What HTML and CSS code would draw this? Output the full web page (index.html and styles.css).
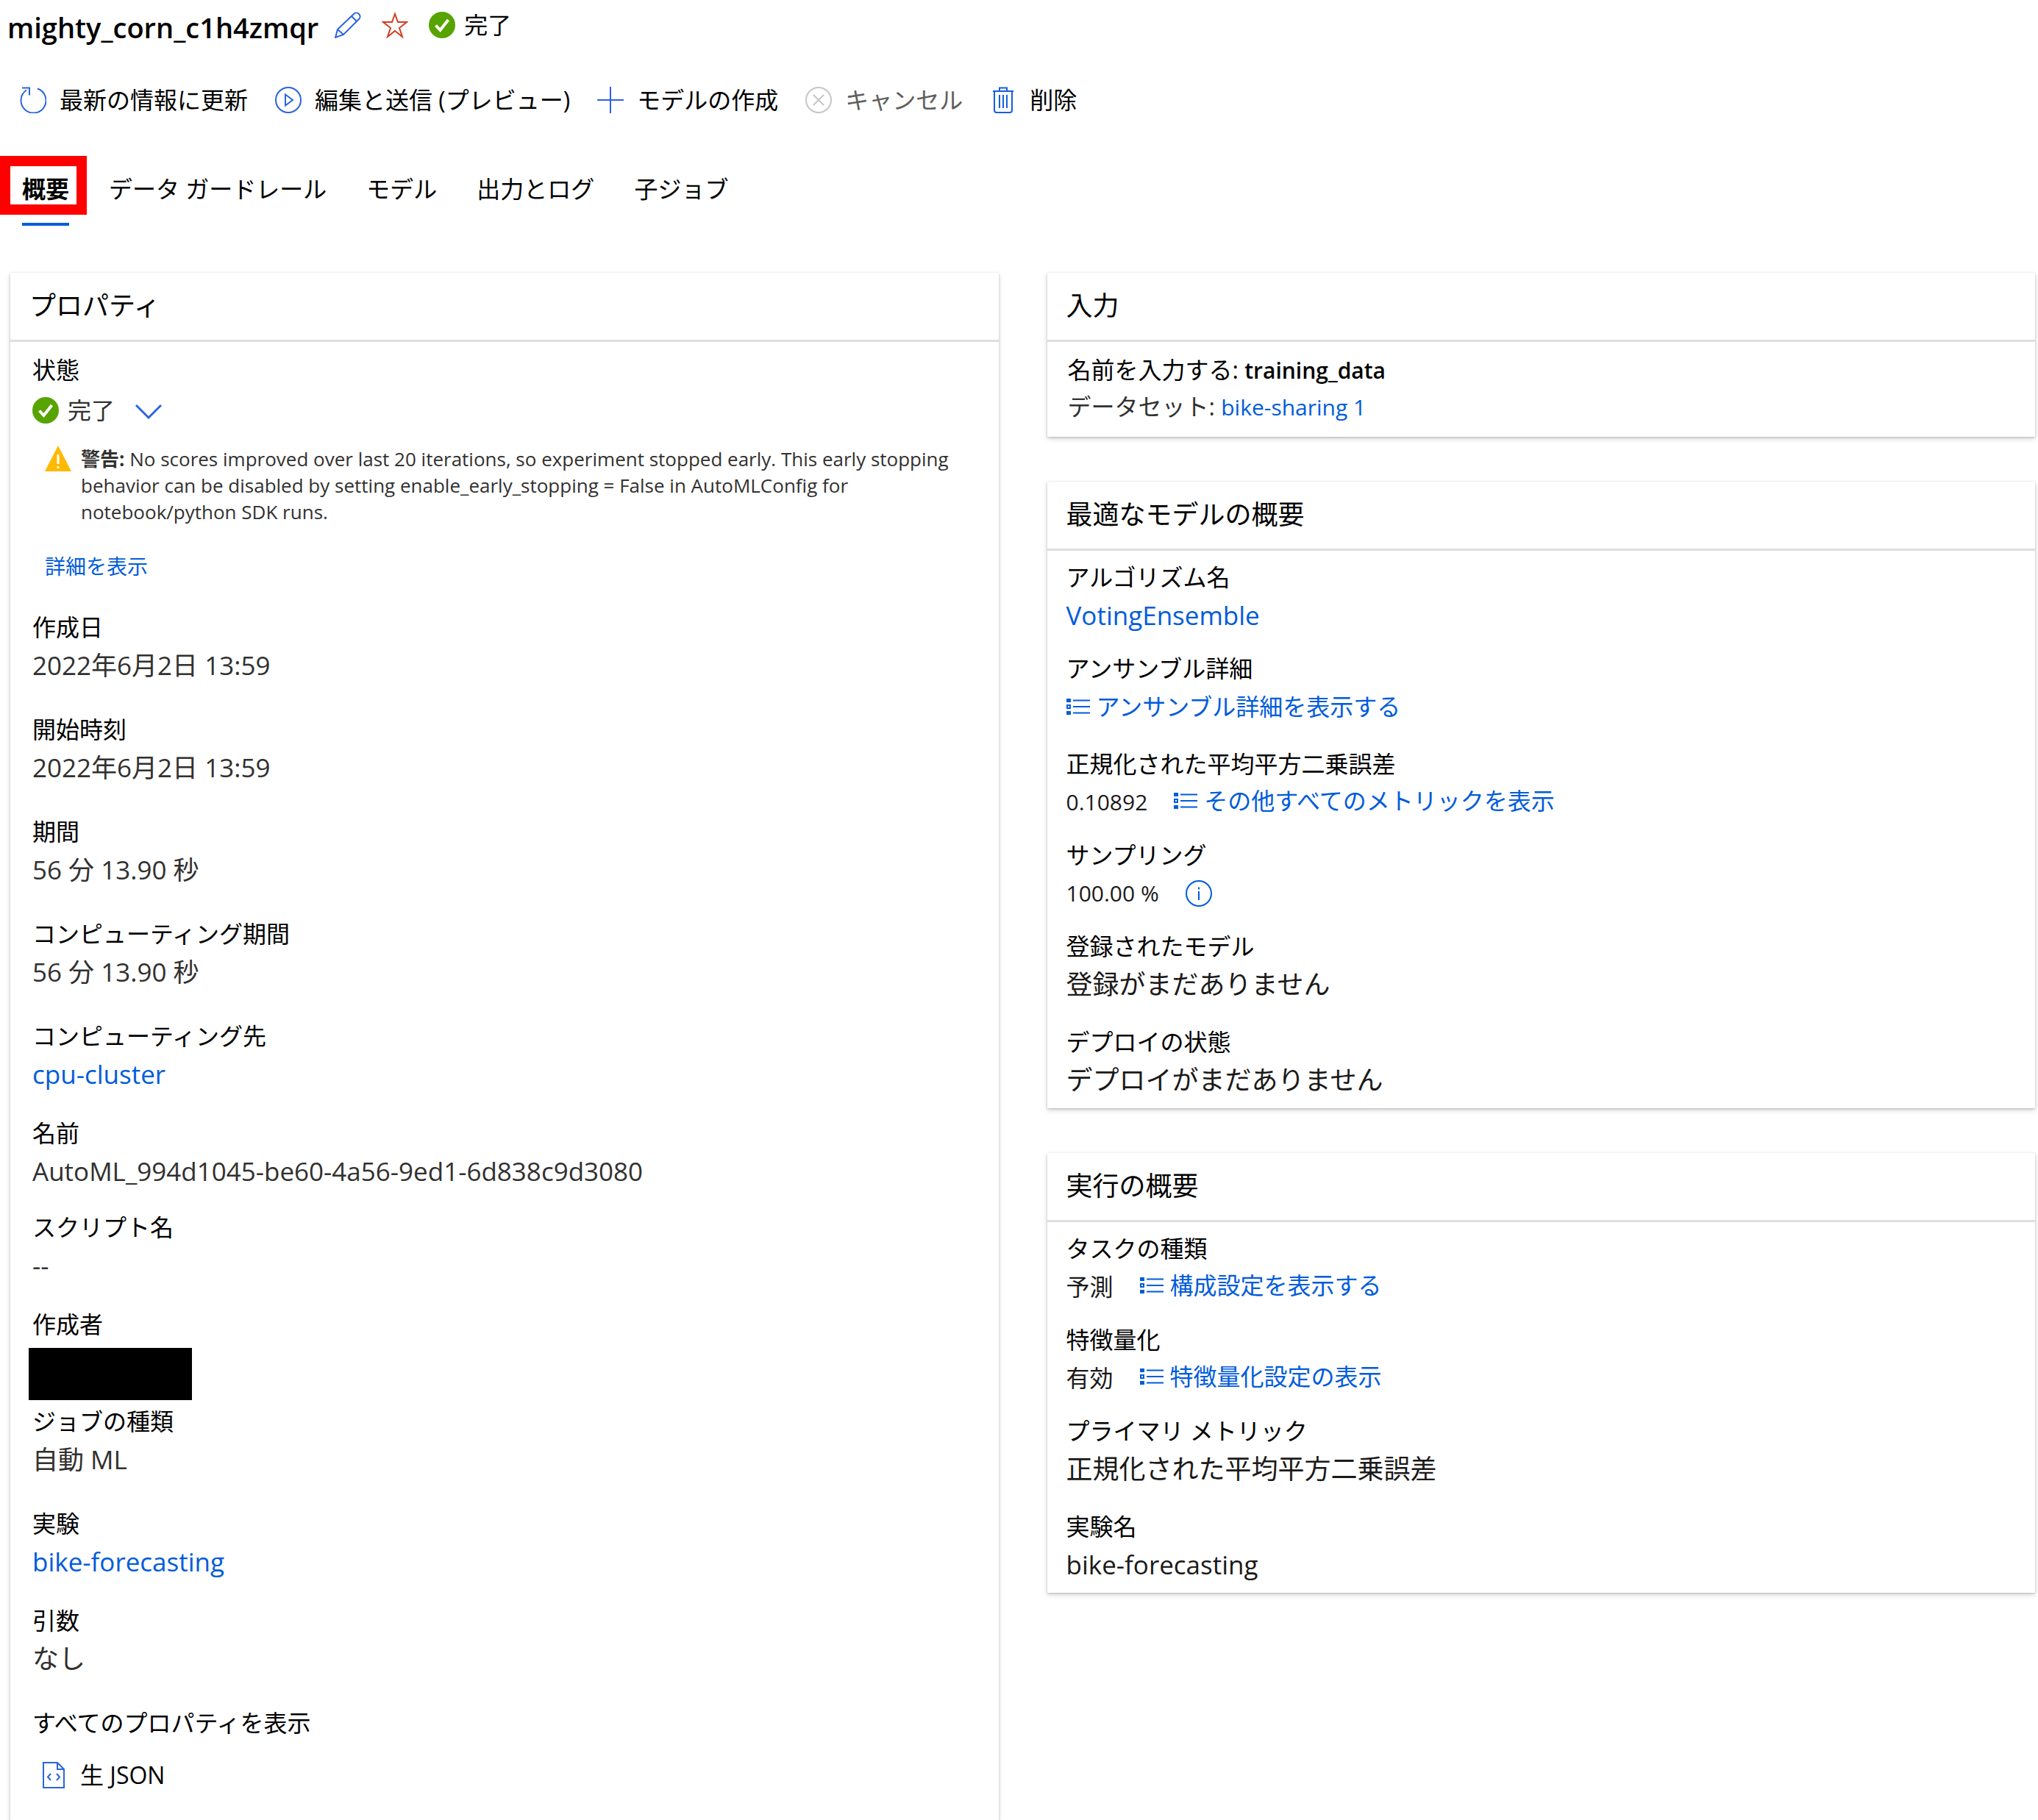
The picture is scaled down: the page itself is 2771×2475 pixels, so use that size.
FILE: index.html
```html
<!DOCTYPE html>
<html lang="ja">
  <head>
    <meta charset="UTF-8" />
    <meta name="viewport" content="width=device-width, initial-scale=1.0" />
    <title>mighty_corn_c1h4zmqr</title>
    <link rel="stylesheet" href="styles.css">
  </head>
  <body>
    <svg class="sprite" aria-hidden="true">
      <symbol id="icon-check" viewBox="0 0 36 36">
        <circle cx="18" cy="18" r="18" fill="#57a300" />
        <path d="M9.500 18.500l6 6.500 11-14" fill="none" stroke="#fff" stroke-width="4" />
      </symbol>
      <symbol id="icon-list" viewBox="0 0 32 24">
        <path d="M9 3.500h23M9 12h23M9 20.500h23" stroke="currentColor" stroke-width="2" />
        <path d="M0 1h6v5H0zM0 18h6v5H0z" fill="currentColor" />
        <path d="M1 10h4v4H1z" fill="none" stroke="currentColor" stroke-width="2" />
      </symbol>
    </svg>

    <header class="title-bar">
      <h1>mighty_corn_c1h4zmqr</h1>
      <button class="icon-button" aria-label="編集">
        <svg class="icon" viewBox="0 0 36 36" fill="none" stroke="#2b63e0" stroke-width="2">
          <path d="M1 35l3-11L26 3c2-2 5-2 7 0s2 5 0 7L12 31zM4 24l8 7M23 6l7 7" />
        </svg>
      </button>
      <button class="icon-button" aria-label="お気に入り">
        <svg class="icon" viewBox="0 0 36 36" fill="none" stroke="#d13d20" stroke-width="2">
          <path d="M18 3l4 11h12l-10 8 4 12-10-8-10 8 4-12-10-8h12z" />
        </svg>
      </button>
      <span class="state">
        <svg class="icon"><use href="#icon-check" /></svg>
        完了
      </span>
    </header>

    <div class="toolbar">
      <button>
        <svg class="icon" viewBox="0 0 36 36" fill="none" stroke="#2b63e0" stroke-width="2">
          <path d="M24 2.500A17 17 0 1 1 9 4.500M3 1.500h10v10" />
        </svg>
        最新の情報に更新
      </button>
      <button>
        <svg class="icon" viewBox="0 0 36 36" fill="none" stroke="#2b63e0" stroke-width="2">
          <circle cx="18" cy="18" r="17" />
          <path d="M14 10.500v15l10-7.500z" />
        </svg>
        編集と送信 (プレビュー)
      </button>
      <button>
        <svg class="icon" viewBox="0 0 36 36" fill="none" stroke="#2b63e0" stroke-width="2">
          <path d="M18 0v36M0 18h36" />
        </svg>
        モデルの作成
      </button>
      <button disabled>
        <svg class="icon" viewBox="0 0 36 36" fill="none" stroke="#c8c6c4" stroke-width="2">
          <circle cx="18" cy="18" r="17" />
          <path d="M11 11l14 14M25 11L11 25" />
        </svg>
        キャンセル
      </button>
      <button>
        <svg class="icon" viewBox="0 0 36 36" fill="none" stroke="#1560dc" stroke-width="2">
          <path d="M4 6h28M13 6V1.500h10V6M6 6v26c0 2 1 3 3 3h18c2 0 3-1 3-3V6M13 11v18M18 11v18M23 11v18" />
        </svg>
        削除
      </button>
    </div>

    <div class="tabs" role="tablist">
      <button class="tab active" role="tab" aria-selected="true">概要</button>
      <button class="tab" role="tab">データ ガードレール</button>
      <button class="tab" role="tab">モデル</button>
      <button class="tab" role="tab">出力とログ</button>
      <button class="tab" role="tab">子ジョブ</button>
    </div>

    <main class="content">
      <section class="card properties">
        <h2>プロパティ</h2>
        <div class="card-body">
          <h3>状態</h3>
          <div class="status-row">
            <svg class="icon"><use href="#icon-check" /></svg>
            完了
            <button class="icon-button chevron" aria-label="展開">
              <svg class="icon" viewBox="0 0 36 36" fill="none" stroke="#2b63e0" stroke-width="3">
                <path d="M1 11l17 17 17-17" />
              </svg>
            </button>
          </div>
          <div class="warning">
            <svg class="icon" viewBox="0 0 36 36">
              <path d="M18 0l18 35H0z" fill="#ffb900" />
              <path d="M18 12v13M18 28v3" stroke="#fff" stroke-width="3" />
            </svg>
            <p><strong>警告:</strong> No scores improved over last 20 iterations, so experiment stopped early. This early stopping behavior can be disabled by setting enable_early_stopping = False in AutoMLConfig for notebook/python SDK runs.</p>
          </div>
          <a class="details" href="#">詳細を表示</a>

          <dl>
            <div class="row tall">
              <dt>作成日</dt>
              <dd class="latin">2022年6月2日 13:59</dd>
            </div>
            <div class="row tall">
              <dt>開始時刻</dt>
              <dd class="latin">2022年6月2日 13:59</dd>
            </div>
            <div class="row tall">
              <dt>期間</dt>
              <dd class="latin">56 分 13.90 秒</dd>
            </div>
            <div class="row tall">
              <dt>コンピューティング期間</dt>
              <dd class="latin">56 分 13.90 秒</dd>
            </div>
            <div class="row">
              <dt>コンピューティング先</dt>
              <dd class="latin"><a href="#">cpu-cluster</a></dd>
            </div>
            <div class="row tight">
              <dt>名前</dt>
              <dd class="latin">AutoML_994d1045-be60-4a56-9ed1-6d838c9d3080</dd>
            </div>
            <div class="row">
              <dt>スクリプト名</dt>
              <dd class="latin">--</dd>
            </div>
            <div class="row">
              <dt>作成者</dt>
              <dd class="author"><span class="redacted"></span></dd>
            </div>
            <div class="row tall">
              <dt>ジョブの種類</dt>
              <dd class="latin">自動 ML</dd>
            </div>
            <div class="row">
              <dt>実験</dt>
              <dd class="latin"><a href="#">bike-forecasting</a></dd>
            </div>
            <div class="row tall">
              <dt>引数</dt>
              <dd>なし</dd>
            </div>
          </dl>

          <h3>すべてのプロパティを表示</h3>
          <button class="json-button">
            <svg class="icon" viewBox="0 0 36 36" fill="none" stroke="#2b63e0" stroke-width="2">
              <path d="M4 1h19l9 9v25H4zM23 1v9h9M14 16l-4 4.500 4 4.500M22 16l4 4.500-4 4.500" />
            </svg>
            生 JSON
          </button>
        </div>
      </section>

      <div class="column">
        <section class="card inputs">
          <h2>入力</h2>
          <div class="card-body">
            <p>名前を入力する: <strong>training_data</strong></p>
            <p class="dataset">データセット: <a href="#">bike-sharing 1</a></p>
          </div>
        </section>

        <section class="card">
          <h2>最適なモデルの概要</h2>
          <dl class="card-body">
            <div class="row">
              <dt>アルゴリズム名</dt>
              <dd class="latin"><a href="#">VotingEnsemble</a></dd>
            </div>
            <div class="row tall">
              <dt>アンサンブル詳細</dt>
              <dd>
                <a class="list-link" href="#"><svg class="list-icon"><use href="#icon-list" /></svg>アンサンブル詳細を表示する</a>
              </dd>
            </div>
            <div class="row">
              <dt>正規化された平均平方二乗誤差</dt>
              <dd class="inline">
                <span class="number">0.10892</span>
                <a class="list-link" href="#"><svg class="list-icon"><use href="#icon-list" /></svg>その他すべてのメトリックを表示</a>
              </dd>
            </div>
            <div class="row">
              <dt>サンプリング</dt>
              <dd class="inline">
                <span class="number">100.00 %</span>
                <button class="icon-button" aria-label="情報">
                  <svg class="icon" viewBox="0 0 36 36" fill="none" stroke="#015cda" stroke-width="2">
                    <circle cx="18" cy="18" r="17" />
                    <path d="M18 15v12M18 9.500v3" />
                  </svg>
                </button>
              </dd>
            </div>
            <div class="row tall">
              <dt>登録されたモデル</dt>
              <dd>登録がまだありません</dd>
            </div>
            <div class="row">
              <dt>デプロイの状態</dt>
              <dd>デプロイがまだありません</dd>
            </div>
          </dl>
        </section>

        <section class="card">
          <h2>実行の概要</h2>
          <dl class="card-body">
            <div class="row">
              <dt>タスクの種類</dt>
              <dd class="inline">
                予測
                <a class="list-link" href="#"><svg class="list-icon"><use href="#icon-list" /></svg>構成設定を表示する</a>
              </dd>
            </div>
            <div class="row">
              <dt>特徴量化</dt>
              <dd class="inline">
                有効
                <a class="list-link" href="#"><svg class="list-icon"><use href="#icon-list" /></svg>特徴量化設定の表示</a>
              </dd>
            </div>
            <div class="row tall">
              <dt>プライマリ メトリック</dt>
              <dd>正規化された平均平方二乗誤差</dd>
            </div>
            <div class="row">
              <dt>実験名</dt>
              <dd class="latin">bike-forecasting</dd>
            </div>
          </dl>
        </section>
      </div>
    </main>
  </body>
</html>
```
FILE: styles.css
```css
*,
*::after {
  box-sizing: border-box;
}
body {
  display: flex;
  flex-direction: column;
  min-height: 100vh;
  margin: 0;
  font-family: "Open Sans", "Noto Sans CJK JP", sans-serif;
  font-size: 32px;
  line-height: 52px;
  color: #000;
  background-color: #fff;
}
h1,
h2,
h3,
p,
dl,
dd {
  margin: 0;
}
a {
  color: #015cda;
  text-decoration: none;
}
button {
  padding: 0;
  border: none;
  background: none;
  font: inherit;
  color: inherit;
  cursor: pointer;
}
.sprite {
  display: none;
}
.icon {
  display: block;
  flex: none;
  width: 36px;
  height: 36px;
}

/* Title and toolbar */
.title-bar {
  display: flex;
  align-items: center;
  gap: 28px;
  height: 68px;
  padding-left: 10px;
}
.title-bar h1 {
  margin-right: -6px;
  padding-top: 6px;
  font-size: 38px;
  font-weight: 600;
}
.state {
  display: flex;
  align-items: center;
  gap: 12px;
}
.toolbar {
  display: flex;
  align-items: center;
  gap: 37px;
  height: 136px;
  padding-left: 27px;
}
.toolbar button {
  display: flex;
  align-items: center;
  gap: 18px;
  white-space: nowrap;
}
.toolbar button:disabled {
  color: #605e5c;
  cursor: default;
}

/* Tabs */
.tabs {
  display: flex;
  gap: 54px;
  margin-top: 7px;
  padding-left: 30px;
}
.tab {
  height: 96px;
  border-bottom: 4px solid transparent;
  white-space: nowrap;
}
.tab.active {
  position: relative;
  border-bottom-color: #015cda;
  font-weight: 700;
}
.tab.active::after {
  content: "";
  position: absolute;
  top: 1px;
  left: -30px;
  width: 118px;
  height: 80px;
  border: 14px solid #f00;
}

/* Cards */
.content {
  flex: 1;
  display: grid;
  grid-template-columns: 1fr 1fr;
  gap: 66px;
  margin-top: 64px;
  padding: 0 4px 0 14px;
}
.column {
  display: flex;
  flex-direction: column;
  gap: 61px;
}
.card {
  background-color: #fff;
  box-shadow: 0 3px 7px rgba(0, 0, 0, 0.14), 0 1px 3px rgba(0, 0, 0, 0.2);
}
.card h2 {
  padding: 19px 26px 20px;
  border-bottom: 3px solid #e1dfdd;
  font-size: 36px;
  font-weight: 400;
}
.card h3 {
  font-size: 32px;
  font-weight: 400;
}
.card-body {
  padding: 10px 26px 12px;
}
.row {
  margin-bottom: 20px;
}
.row.tall {
  margin-bottom: 26px;
}
.row:last-child {
  margin-bottom: 0;
}
dd {
  height: 52px;
  font-size: 36px;
  color: #1b1a19;
}
dd.latin {
  font-size: 35px;
}
dd.inline {
  display: flex;
  align-items: center;
  gap: 36px;
  font-size: 32px;
}
.number {
  font-size: 30px;
}
.list-link {
  display: flex;
  align-items: center;
  gap: 9px;
  padding-bottom: 4px;
  font-size: 32px;
}
.list-icon {
  width: 32px;
  height: 24px;
}

/* Properties */
.properties .card-body {
  padding: 12px 30px;
}
.properties .row {
  margin-bottom: 28px;
}
.properties .row.tall {
  margin-bottom: 35px;
}
.properties .row.tight {
  margin-bottom: 24px;
}
.properties dd {
  color: #323130;
}
.status-row {
  display: flex;
  align-items: center;
  gap: 12px;
  height: 58px;
  color: #323130;
}
.chevron {
  margin-left: 16px;
}
.warning {
  display: flex;
  gap: 13px;
  margin: 19px 24px 38px 17px;
  font-size: 26px;
  line-height: 36px;
  color: #323130;
}
.details {
  display: block;
  margin: 0 0 39px 17px;
  font-size: 28px;
  line-height: 36px;
}
.author {
  padding-top: 6px;
}
.redacted {
  display: block;
  width: 222px;
  height: 71px;
  margin-left: -5px;
  background-color: #000;
}
.json-button {
  display: flex;
  align-items: center;
  gap: 18px;
  margin: 19px 0 0 11px;
}

/* Inputs */
.inputs .card-body {
  padding: 13px 28px 16px;
  line-height: 49px;
}
.inputs strong,
.inputs a {
  font-size: 30px;
  font-weight: 600;
}
.inputs a {
  font-weight: 400;
}
.dataset {
  color: #323130;
}
```
